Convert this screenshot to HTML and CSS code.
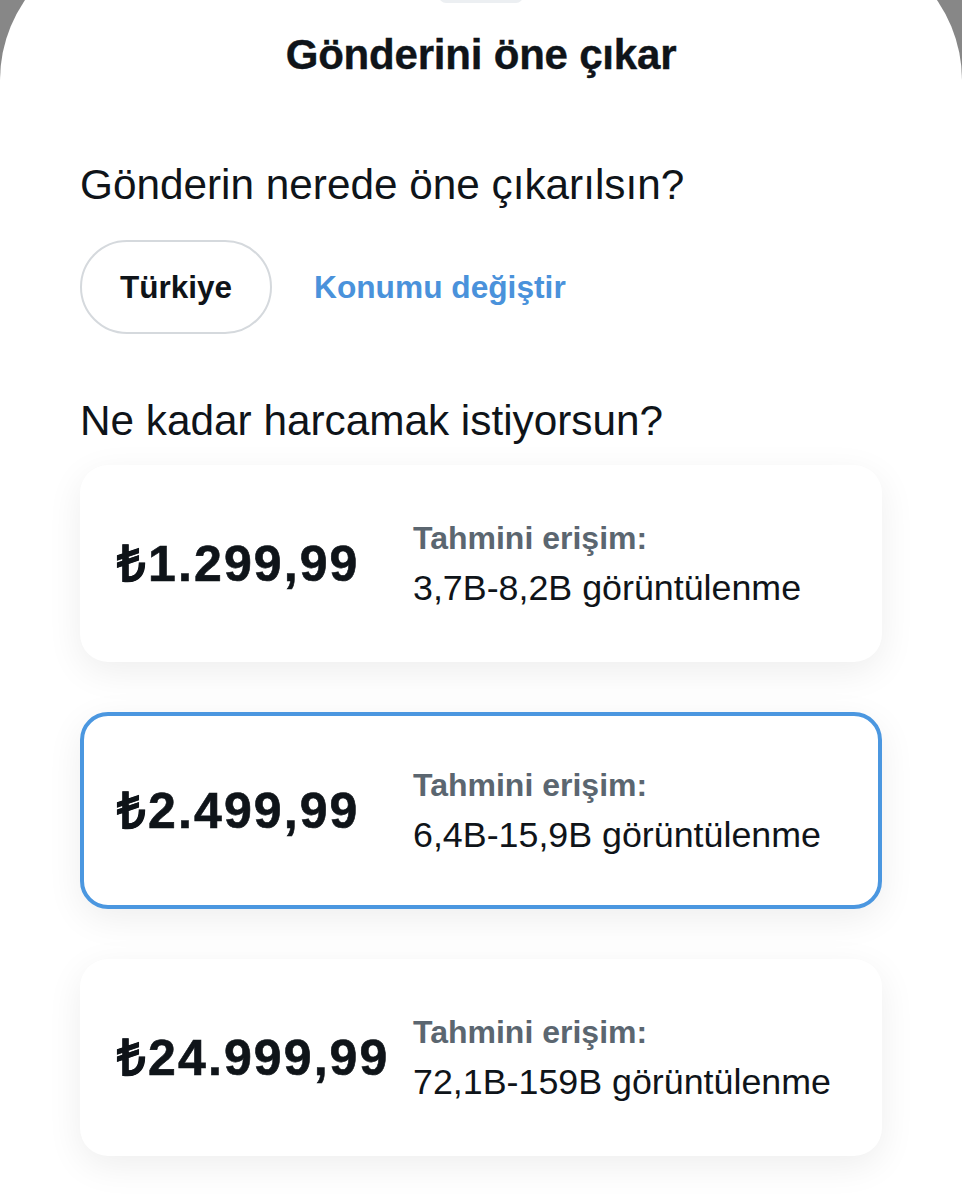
FILE: index.html
```html
<!DOCTYPE html>
<html lang="tr">
<head>
<meta charset="utf-8">
<title>Gönderini öne çıkar</title>
<link rel="stylesheet" href="styles.css">
</head>
<body>
<div class="sheet">
  <div class="grabber"></div>
  <h1 class="title">Gönderini öne çıkar</h1>
  <h2 class="question q-location">Gönderin nerede öne çıkarılsın?</h2>
  <div class="location-row">
    <div class="pill">Türkiye</div>
    <a class="link" href="#">Konumu değiştir</a>
  </div>
  <h2 class="question q-budget">Ne kadar harcamak istiyorsun?</h2>
  <div class="cards">
    <div class="card">
      <div class="price">₺1.299,99</div>
      <div class="reach">
        <div class="reach-label">Tahmini erişim:</div>
        <div class="reach-value">3,7B-8,2B görüntülenme</div>
      </div>
    </div>
    <div class="card selected">
      <div class="price">₺2.499,99</div>
      <div class="reach">
        <div class="reach-label">Tahmini erişim:</div>
        <div class="reach-value">6,4B-15,9B görüntülenme</div>
      </div>
    </div>
    <div class="card">
      <div class="price">₺24.999,99</div>
      <div class="reach">
        <div class="reach-label">Tahmini erişim:</div>
        <div class="reach-value">72,1B-159B görüntülenme</div>
      </div>
    </div>
  </div>
</div>
</body>
</html>
```

FILE: styles.css
```css
html, body {
  margin: 0;
  padding: 0;
}
body {
  background: #878787;
  font-family: "Liberation Sans", Arial, sans-serif;
  color: #0f1419;
  overflow: hidden;
}
.sheet {
  margin-top: -60px;
  background: #ffffff;
  border-radius: 140px 140px 0 0;
  min-height: 1300px;
  padding: 0 80px;
  display: flex;
  flex-direction: column;
}
.grabber {
  align-self: center;
  width: 84px;
  height: 14px;
  margin-top: 49px;
  border-radius: 7px;
  background: #eceff2;
}
.title {
  margin: 28px 0 0;
  font-size: 42px;
  line-height: 48px;
  font-weight: 700;
  text-align: center;
  letter-spacing: -0.2px;
  -webkit-text-stroke: 0.4px #0f1419;
}
.question {
  margin: 0;
  font-size: 42.3px;
  line-height: 50px;
  font-weight: 400;
}
.q-location {
  margin-top: 81px;
}
.location-row {
  margin-top: 30px;
  display: flex;
  align-items: center;
  gap: 42px;
}
.pill {
  box-sizing: border-box;
  width: 192px;
  height: 94px;
  border: 2px solid #d5d9dd;
  border-radius: 47px;
  display: flex;
  align-items: center;
  justify-content: center;
  font-size: 31.5px;
  font-weight: 700;
}
.link {
  color: #4a92db;
  text-decoration: none;
  font-size: 31.7px;
  font-weight: 700;
}
.q-budget {
  margin-top: 62px;
}
.cards {
  margin-top: 19px;
  display: flex;
  flex-direction: column;
  gap: 50px;
}
.card {
  box-sizing: border-box;
  height: 197px;
  border: 4px solid transparent;
  border-radius: 28px;
  background: #ffffff;
  box-shadow: 0 10px 36px rgba(0, 0, 0, 0.07);
  display: grid;
  grid-template-columns: 296px 1fr;
  align-items: center;
  padding-left: 33px;
}
.card.selected {
  border-color: #4b97e0;
}
.price {
  font-size: 50px;
  line-height: 56px;
  font-weight: 700;
  white-space: nowrap;
  letter-spacing: 2.1px;
  -webkit-text-stroke: 0.6px #0f1419;
}
.reach {
  display: flex;
  flex-direction: column;
  margin-top: -2px;
}
.reach-label {
  font-size: 32px;
  line-height: 50px;
  font-weight: 700;
  color: #5b6670;
}
.reach-value {
  font-size: 35.8px;
  line-height: 50px;
  font-weight: 400;
  white-space: nowrap;
}
```
